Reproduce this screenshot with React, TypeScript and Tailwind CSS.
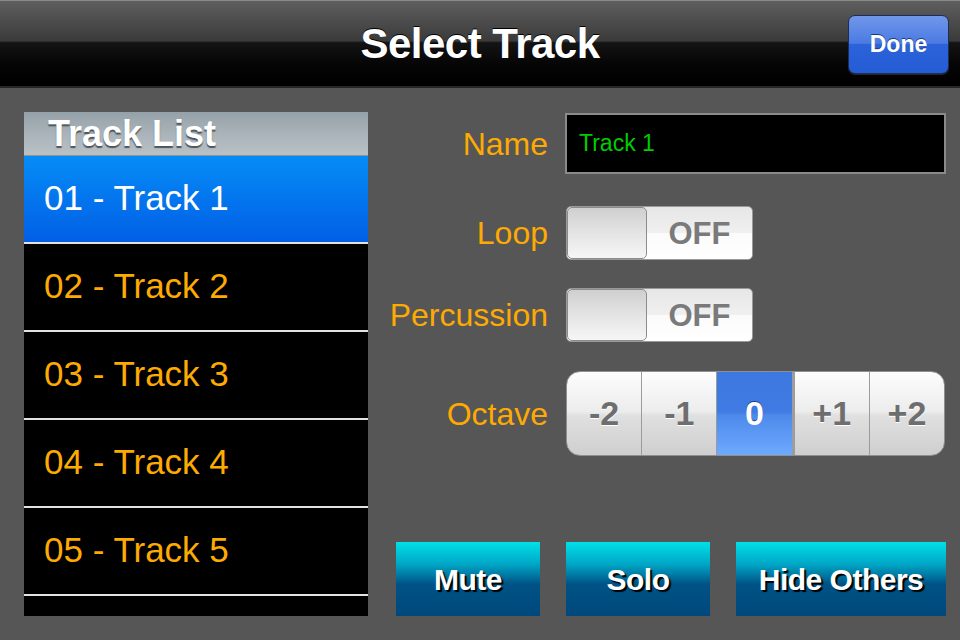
import React from 'react';

const tracks = ['01 - Track 1', '02 - Track 2', '03 - Track 3', '04 - Track 4', '05 - Track 5', ''];
const octaves = ['-2', '-1', '0', '+1', '+2'];

function Toggle() {
  return (
    <div className="flex h-[54px] w-[187px] rounded-[5px] border border-[#9a9a9a] bg-[linear-gradient(to_bottom,#e6e6e6_0%,#f0f0f0_50%,#fbfbfb_51%,#ffffff_100%)] overflow-hidden">
      <div className="w-[80px] h-full rounded-[5px] border border-[#8c8c8c] bg-[linear-gradient(to_bottom,#cfcfcf_0%,#e4e4e4_50%,#f6f6f6_100%)]" />
      <div className="flex-1 flex items-center justify-center text-[31px] font-bold text-[#7a7a7a] pt-[2px]">OFF</div>
    </div>
  );
}

function Label({ children }: { children: React.ReactNode }) {
  return <div className="w-[180px] text-right text-[32px] text-[#fdaa03] leading-none">{children}</div>;
}

export default function App() {
  return (
    <div className="w-[960px] h-[640px] flex flex-col bg-[#565656] overflow-hidden" style={{ fontFamily: '"Liberation Sans", Arial, sans-serif' }}>
      {/* Nav bar */}
      <div className="relative h-[88px] shrink-0 flex items-center justify-center border-b-2 border-[#262626] border-t border-t-[#8a8a8a] bg-[linear-gradient(to_bottom,#5f5f5f_0%,#3a3a3a_47%,#141414_49%,#050505_75%,#000000_100%)]">
        <h1 className="text-[42px] font-bold text-white tracking-[-0.5px] [text-shadow:0_-1px_0_#000]">Select Track</h1>
        <button className="absolute right-[11px] top-[14px] w-[101px] h-[59px] rounded-[7px] border border-[#1d2d55] bg-[linear-gradient(to_bottom,#7197ea_0%,#4a7ae2_48%,#2c63da_50%,#245cd6_100%)] text-[23px] font-bold text-white [text-shadow:0_-1px_0_#1a3a80] shadow-[0_1px_0_rgba(255,255,255,0.15)]">
          Done
        </button>
      </div>

      <div className="flex flex-1">
        {/* Track list */}
        <div className="ml-[24px] mt-[24px] w-[344px] h-[504px] bg-black overflow-hidden flex flex-col">
          <div className="h-[44px] shrink-0 border-b border-[#8a949b] bg-[linear-gradient(to_bottom,#95a1a9_0%,#a9b3b9_50%,#b9c1c6_100%)] pl-[24px] flex items-center">
            <span className="text-[36px] font-bold text-white leading-none [text-shadow:0_2px_1px_#4e555a]">Track List</span>
          </div>
          {tracks.map((t, i) => (
            <div
              key={i}
              className={`h-[88px] shrink-0 flex items-center pl-[20px] border-b-2 border-[#e2e2e2] text-[35px] ${
                i === 0 ? 'bg-[linear-gradient(to_bottom,#058cf6_0%,#025fe6_100%)] text-white' : 'text-[#fdaa03]'
              }`}
            >
              <span className="-mt-[2px]">{t}</span>
            </div>
          ))}
        </div>

        {/* Properties */}
        <div className="flex-1 flex flex-col pt-[25px]">
          <div className="flex items-center gap-[17px] h-[61px]">
            <Label>Name</Label>
            <div className="w-[381px] h-[61px] border-2 border-[#8a8a8a] bg-black flex items-center pl-[12px] text-[23px] text-[#00cc00]">Track 1</div>
          </div>

          <div className="flex items-center gap-[18px] h-[54px] mt-[32px]">
            <Label>Loop</Label>
            <Toggle />
          </div>

          <div className="flex items-center gap-[18px] h-[54px] mt-[28px]">
            <Label>Percussion</Label>
            <Toggle />
          </div>

          <div className="flex items-center gap-[18px] h-[85px] mt-[29px]">
            <Label>Octave</Label>
            <div className="flex w-[379px] h-[85px] rounded-[14px] border border-[#8f8f8f] overflow-hidden bg-[linear-gradient(to_bottom,#fdfdfd_0%,#ececec_48%,#e0e0e0_52%,#cfcfcf_100%)]">
              {octaves.map((o, i) => (
                <div
                  key={o}
                  className={`flex-1 flex items-center justify-center text-[34px] font-bold ${
                    i > 0 ? 'border-l border-[#9c9c9c]' : ''
                  } ${
                    o === '0'
                      ? 'border-x-2 border-[#1f4a9a] bg-[linear-gradient(to_bottom,#3c78df_0%,#3f7be2_48%,#4d89ea_52%,#6eaaff_100%)] text-white [text-shadow:0_-1px_0_#1e3f85]'
                      : 'text-[#6e6e6e] [text-shadow:0_1px_0_#ffffff]'
                  }`}
                >
                  {o}
                </div>
              ))}
            </div>
          </div>

          <div className="flex gap-[26px] ml-[28px] mt-[86px]">
            {['Mute', 'Solo', 'Hide Others'].map((b) => (
              <button
                key={b}
                className={`h-[74px] ${b === 'Hide Others' ? 'w-[210px]' : 'w-[144px]'} bg-[linear-gradient(to_bottom,#00e0e8_0%,#00a6c6_30%,#005286_57%,#00487b_100%)] text-[30px] font-bold text-white tracking-[-0.5px] [text-shadow:2px_2px_1px_#000]`}
              >
                {b}
              </button>
            ))}
          </div>
        </div>
      </div>
    </div>
  );
}
